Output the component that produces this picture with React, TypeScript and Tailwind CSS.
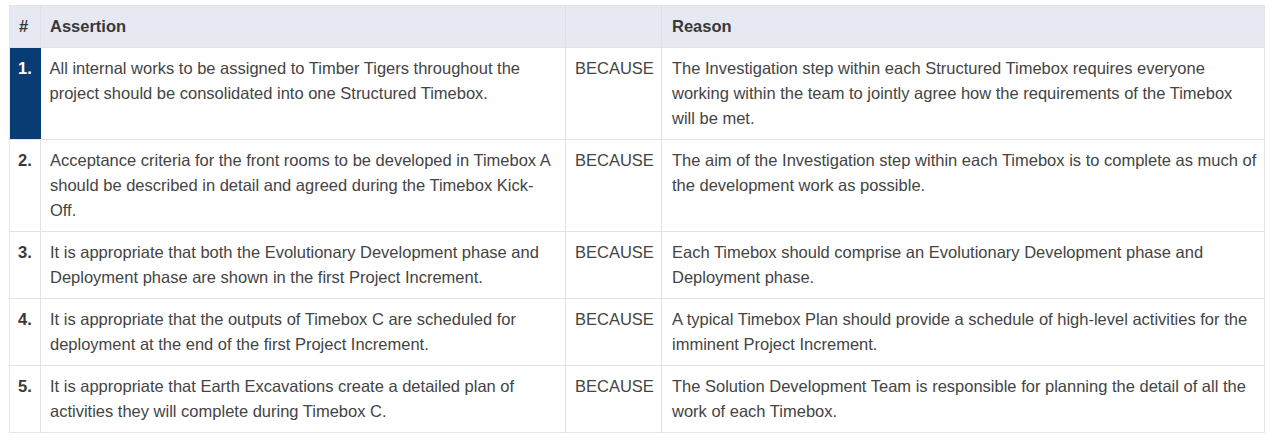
import React from "react";

const rows = [
  {
    n: "1.",
    a: "All internal works to be assigned to Timber Tigers throughout the project should be consolidated into one Structured Timebox.",
    r: "The Investigation step within each Structured Timebox requires everyone working within the team to jointly agree how the requirements of the Timebox will be met.",
    active: true,
  },
  {
    n: "2.",
    a: "Acceptance criteria for the front rooms to be developed in Timebox A should be described in detail and agreed during the Timebox Kick-Off.",
    r: "The aim of the Investigation step within each Timebox is to complete as much of the development work as possible.",
  },
  {
    n: "3.",
    a: "It is appropriate that both the Evolutionary Development phase and Deployment phase are shown in the first Project Increment.",
    r: "Each Timebox should comprise an Evolutionary Development phase and Deployment phase.",
  },
  {
    n: "4.",
    a: "It is appropriate that the outputs of Timebox C are scheduled for deployment at the end of the first Project Increment.",
    r: "A typical Timebox Plan should provide a schedule of high-level activities for the imminent Project Increment.",
  },
  {
    n: "5.",
    a: "It is appropriate that Earth Excavations create a detailed plan of activities they will complete during Timebox C.",
    r: "The Solution Development Team is responsible for planning the detail of all the work of each Timebox.",
  },
];

export default function App() {
  return (
    <div className="w-[1276px] h-[446px] bg-white pt-[5px] pl-[9px] font-['Liberation_Sans',Arial,sans-serif] text-[16.5px] leading-[25px] text-[#444]">
      <table className="w-[1255px] border-collapse table-fixed border border-[#e4e6ea]">
        <colgroup>
          <col className="w-[31px]" />
          <col className="w-[525px]" />
          <col className="w-[96px]" />
          <col className="w-[603px]" />
        </colgroup>
        <thead>
          <tr className="bg-[#e6e9f1] text-left font-bold text-[#383838]">
            <th className="py-2 pl-[9px] pr-1 border-r border-[#dde0e6] align-top">#</th>
            <th className="py-2 px-[9px] border-r border-[#dde0e6] align-top">Assertion</th>
            <th className="py-2 px-[9px] border-r border-[#dde0e6]"></th>
            <th className="py-2 pl-[10px] pr-[6px] align-top">Reason</th>
          </tr>
        </thead>
        <tbody>
          {rows.map((row) => (
            <tr key={row.n} className="border-t border-[#e3e3e3] align-top">
              <td
                className={
                  row.active
                    ? "py-2 pl-[8px] pr-1 bg-[#083d74] text-white font-bold"
                    : "py-2 pl-[8px] pr-1 font-bold text-[#3a3a3a] border-r border-[#e3e3e3]"
                }
              >
                {row.n}
              </td>
              <td className="py-2 px-[9px] border-r border-[#e3e3e3]">{row.a}</td>
              <td className="py-2 px-[9px] border-r border-[#e3e3e3]">BECAUSE</td>
              <td className="py-2 pl-[10px] pr-[6px]">{row.r}</td>
            </tr>
          ))}
        </tbody>
      </table>
    </div>
  );
}
